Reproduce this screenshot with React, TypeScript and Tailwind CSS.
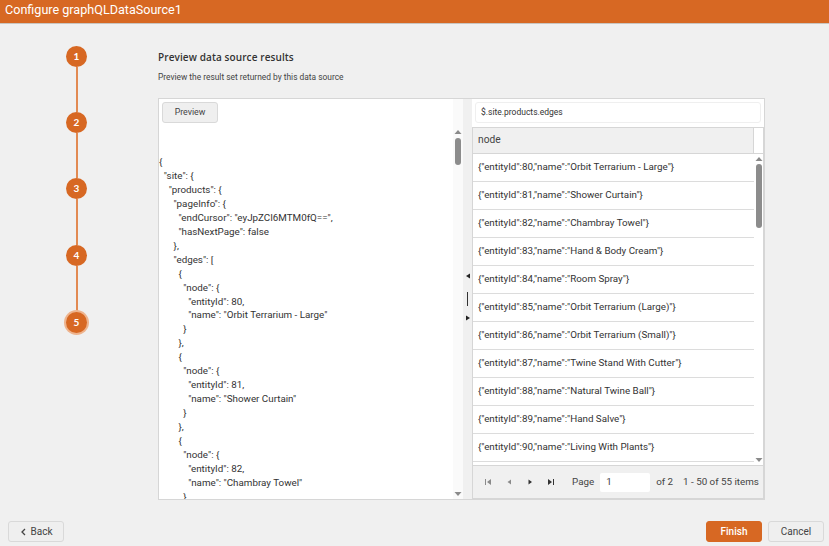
const ff = "font-['Roboto','Liberation_Sans',sans-serif]";

const json = `{
  "site": {
    "products": {
      "pageInfo": {
        "endCursor": "eyJpZCI6MTM0fQ==",
        "hasNextPage": false
      },
      "edges": [
        {
          "node": {
            "entityId": 80,
            "name": "Orbit Terrarium - Large"
          }
        },
        {
          "node": {
            "entityId": 81,
            "name": "Shower Curtain"
          }
        },
        {
          "node": {
            "entityId": 82,
            "name": "Chambray Towel"
          }`;

const rows: [number, string][] = [
  [80, "Orbit Terrarium - Large"],
  [81, "Shower Curtain"],
  [82, "Chambray Towel"],
  [83, "Hand & Body Cream"],
  [84, "Room Spray"],
  [85, "Orbit Terrarium (Large)"],
  [86, "Orbit Terrarium (Small)"],
  [87, "Twine Stand With Cutter"],
  [88, "Natural Twine Ball"],
  [89, "Hand Salve"],
  [90, "Living With Plants"],
];

function Step({ n, active }: { n: number; active?: boolean }) {
  return (
    <div
      className={
        "w-[21px] h-[21px] shrink-0 rounded-full bg-[#d76823] text-white flex items-center justify-center text-[10px] font-bold font-['Lato',sans-serif] " +
        (active ? "ring-2 ring-[#eeb48e]" : "")
      }
    >
      {n}
    </div>
  );
}

function Arrow({ up }: { up?: boolean }) {
  return (
    <svg width="8" height="6" viewBox="0 0 8 6" className="shrink-0">
      <path d={up ? "M4 1 L7.5 5 L0.5 5 Z" : "M0.5 1 L7.5 1 L4 5 Z"} fill="#8a8a8a" />
    </svg>
  );
}

function Scrollbar({ top, h, thumbTop }: { top?: string; h: number; thumbTop: number }) {
  return (
    <div className={"w-[10px] shrink-0 flex flex-col items-center justify-between " + (top || "")}>
      <div className="flex flex-col items-center w-full">
        <Arrow up />
        <div className="w-[6px] rounded-[3px] bg-[#8c8c8c]" style={{ height: h, marginTop: thumbTop }} />
      </div>
      <Arrow />
    </div>
  );
}

function Pager({ d, dark }: { d: string; dark?: boolean }) {
  return (
    <svg width="8" height="8" viewBox="0 0 8 8">
      <path d={d} fill={dark ? "#333333" : "#8a8a8a"} />
    </svg>
  );
}

function Btn({ children, primary, small, gap }: { children: React.ReactNode; primary?: boolean; small?: boolean; gap?: boolean }) {
  return (
    <div
      className={
        "h-[21px] w-[56px] rounded-[3px] border flex items-center justify-center " +
        (small ? "text-[8.8px] " : "text-[10px] ") +
        (gap ? "gap-[4px] " : "") +
        (primary
          ? "border-[#d76823] bg-[#d76823] text-white font-medium"
          : "border-[#d9d9d9] bg-[#efefef] text-[#444]")
      }
    >
      {children}
    </div>
  );
}

export default function App() {
  return (
    <div className={"w-[829px] h-[546px] overflow-hidden bg-[#f0f0f0] flex flex-col " + ff}>
      <div className="h-[24px] shrink-0 bg-[#d76823] border-b border-[#c9c5c0] text-white text-[12.6px] leading-[20px] pl-[5px]">
        Configure graphQLDataSource1
      </div>

      <div className="flex-1 flex min-h-0">
        <div className="w-[158px] shrink-0 pl-[66px] pt-[22px]">
          <div className="w-[21px] flex flex-col items-center">
            <Step n={1} />
            <div className="w-[2px] h-[45px] bg-[#e28a52]" />
            <Step n={2} />
            <div className="w-[2px] h-[45px] bg-[#e28a52]" />
            <Step n={3} />
            <div className="w-[2px] h-[46px] bg-[#e28a52]" />
            <Step n={4} />
            <div className="w-[2px] h-[46px] bg-[#e28a52]" />
            <Step n={5} active />
          </div>
        </div>

        <div className="flex flex-col w-[607px]">
          <div className="pt-[26px] text-[10px] leading-[14px] font-semibold text-[#333] font-['Open_Sans',sans-serif] tracking-[0.1px]">
            Preview data source results
          </div>
          <div className="pt-[7px] text-[8.4px] leading-[12px] text-[#444]">
            Preview the result set returned by this data source
          </div>

          <div className="mt-[15px] h-[402px] border border-[#d6d6d6] bg-white flex">
            <div className="w-[304px] shrink-0 flex">
              <div className="w-[294px] flex flex-col overflow-hidden">
                <div className="pl-[3px] pt-[3px]">
                  <Btn small>Preview</Btn>
                </div>
                <pre className={"mt-[32px] text-[9.8px] leading-[13.95px] text-[#333] overflow-hidden whitespace-pre pl-0 " + ff}>
                  {json}
                </pre>
              </div>
              <Scrollbar top="pt-[30px] pb-[2px] bg-[#fafafa]" h={27} thumbTop={3} />
            </div>

            <div className="w-[9px] shrink-0 bg-[#f0f0f0] flex flex-col items-center justify-center pb-[4px]">
              <svg width="6" height="6" viewBox="0 0 6 6">
                <path d="M5 0.5 L5 5.5 L1 3 Z" fill="#222" />
              </svg>
              <div className="w-[1.5px] h-[14px] mt-[13px] mb-[9px] bg-[#333]" />
              <svg width="6" height="6" viewBox="0 0 6 6">
                <path d="M1 0.5 L1 5.5 L5 3 Z" fill="#222" />
              </svg>
            </div>

            <div className="flex-1 flex flex-col min-w-0">
              <div className="h-[28px] shrink-0 px-[3px] pt-[3px]">
                <div className="h-[21px] rounded-[3px] border border-[#efefef] flex items-center pl-[5px] text-[8.5px] text-[#333]">
                  $.site.products.edges
                </div>
              </div>
              <div className="flex-1 flex flex-col border border-[#d6d6d6] min-h-0">
                <div className="h-[26px] shrink-0 flex border-b border-[#d6d6d6]">
                  <div className="w-[281px] bg-[#f0f0f0] border-r border-[#d6d6d6] flex items-center pl-[5px] pb-[2px] text-[10.2px] text-[#444]">
                    node
                  </div>
                  <div className="flex-1 bg-white" />
                </div>
                <div className="flex-1 flex min-h-0">
                  <div className="w-[281px] flex flex-col overflow-hidden">
                    {rows.map(([id, name]) => (
                      <div
                        key={id}
                        className="h-[28px] shrink-0 border-b border-[#dcdcdc] flex items-center pl-[5px] text-[9.8px] text-[#333]"
                      >
                        {`{"entityId":${id},"name":"${name}"}`}
                      </div>
                    ))}
                  </div>
                  <Scrollbar top="pt-[2px] pb-[2px] flex-1" h={64} thumbTop={2} />
                </div>
                <div className="h-[33px] shrink-0 bg-[#f0f0f0] border-t border-[#d6d6d6] flex items-center text-[9.8px] text-[#444] whitespace-nowrap">
                  <div className="flex items-center gap-[13px] pl-[11px]">
                    <Pager d="M1 1 H2 V7 H1 Z M7 1 V7 L3 4 Z" />
                    <Pager d="M6 1.5 V6.5 L2.5 4 Z" />
                    <Pager dark d="M2.5 1.5 V6.5 L6 4 Z" />
                    <Pager dark d="M1 1 V7 L5 4 Z M6 1 H7 V7 H6 Z" />
                  </div>
                  <span className="ml-[17px]">Page</span>
                  <div className="ml-[6px] w-[50px] h-[19px] rounded-[2px] bg-white flex items-center pl-[6px]">1</div>
                  <span className="ml-[6px]">of 2</span>
                  <span className="ml-[10px]">1 - 50 of 55 items</span>
                </div>
              </div>
            </div>
          </div>
        </div>
      </div>

      <div className="h-[46px] shrink-0 flex items-start justify-between pt-[21px] pl-[8px] pr-[5px]">
        <Btn gap>
          <svg width="7" height="8" viewBox="0 0 7 8">
            <path d="M5 1 L2 4 L5 7" fill="none" stroke="#444" strokeWidth="1.3" />
          </svg>
          Back
        </Btn>
        <div className="flex gap-[6px]">
          <Btn primary>Finish</Btn>
          <Btn>Cancel</Btn>
        </div>
      </div>
    </div>
  );
}
